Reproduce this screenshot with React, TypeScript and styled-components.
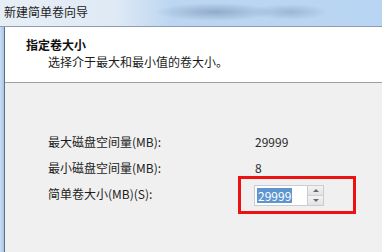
import React from "react";
import styled, { createGlobalStyle } from "styled-components";

const Global = createGlobalStyle`
  html, body { margin: 0; padding: 0; background: #f0f0f0; }
  body { font-family: "Noto Sans CJK SC", "Noto Sans", sans-serif; }
`;

const Window = styled.div`
  width: 382px;
  height: 252px;
  display: flex;
  flex-direction: column;
  overflow: hidden;
  font-size: 12px;
  color: #1b1b1b;
`;

const TitleBar = styled.div`
  height: 26px;
  flex: none;
  display: flex;
  align-items: center;
  padding-left: 4px;
  background:
    radial-gradient(ellipse 60px 9px at 215px 12px, rgba(110, 135, 170, 0.55), transparent),
    radial-gradient(ellipse 38px 8px at 290px 12px, rgba(120, 145, 180, 0.45), transparent),
    linear-gradient(90deg, #e7eef6 0%, #dfeaf5 30%, #bcd6f1 45%, #b8d5f3 100%);
  border-bottom: 1px solid #8e9cad;
`;

const TitleText = styled.span`
  font-size: 12px;
  color: #222;
  line-height: 1;
  margin-top: -3px;
`;

const Frame = styled.div`
  flex: 1;
  display: flex;
`;

const SideEdge = styled.div`
  width: 4px;
  flex: none;
  background: linear-gradient(90deg, #c9ddf2, #a7c6e8);
  border-right: 1px solid #5d6f85;
`;

const Dialog = styled.div`
  flex: 1;
  display: flex;
  flex-direction: column;
`;

const Header = styled.div`
  height: 56px;
  flex: none;
  background: #ffffff;
  border-bottom: 1px solid #a0a0a0;
  box-shadow: 0 1px 0 #ffffff;
  padding: 10px 0 0 21px;
  box-sizing: border-box;
  display: flex;
  flex-direction: column;
`;

const HeaderTitle = styled.div`
  font-weight: bold;
  font-size: 12px;
  line-height: 16px;
  color: #111;
`;

const HeaderSub = styled.div`
  font-size: 12px;
  line-height: 16px;
  margin-top: 1px;
  padding-left: 22px;
  color: #1a1a1a;
`;

const Body = styled.div`
  flex: 1;
  background: #f0f0f0;
  padding: 45px 0 0 43px;
  display: grid;
  grid-template-columns: 206px auto;
  grid-auto-rows: 26px;
  align-content: start;
  align-items: center;
`;

const Label = styled.div`
  font-size: 12px;
  color: #1c1c1c;
`;

const Value = styled.div`
  font-size: 12px;
  color: #2a2a2a;
  padding-left: 1px;
`;

const SpinnerWrap = styled.div`
  position: relative;
  display: flex;
  width: 70px;
  height: 21px;
  margin-top: 5px;
`;

const Field = styled.div`
  flex: 1;
  background: #ffffff;
  border: 1px solid #c9ccd2;
  border-right: none;
  display: flex;
  align-items: center;
  padding-left: 2px;
`;

const Selected = styled.span`
  background: #5d95cf;
  color: #ffffff;
  font-size: 12px;
  line-height: 15px;
  padding: 0 1px;
`;

const SpinButtons = styled.div`
  width: 15px;
  display: flex;
  flex-direction: column;
  border: 1px solid #c9ccd2;
`;

const SpinButton = styled.div<{ $down?: boolean }>`
  flex: 1;
  display: flex;
  align-items: center;
  justify-content: center;
  background: linear-gradient(#f4f4f4, #e2e2e2);
  border-top: ${(p) => (p.$down ? "1px solid #d0d0d0" : "none")};
  &::after {
    content: "";
    border-left: 3px solid transparent;
    border-right: 3px solid transparent;
    ${(p) =>
      p.$down
        ? "border-top: 3px solid #6a6a6a;"
        : "border-bottom: 3px solid #6a6a6a;"}
  }
`;

const Highlight = styled.div`
  position: absolute;
  left: -16px;
  top: -9px;
  width: 112px;
  height: 32px;
  border: 3px solid #ee1111;
  pointer-events: none;
`;

export default function App() {
  return (
    <>
      <Global />
      <Window>
        <TitleBar>
          <TitleText>新建简单卷向导</TitleText>
        </TitleBar>
        <Frame>
          <SideEdge />
          <Dialog>
            <Header>
              <HeaderTitle>指定卷大小</HeaderTitle>
              <HeaderSub>选择介于最大和最小值的卷大小。</HeaderSub>
            </Header>
            <Body>
              <Label>最大磁盘空间量(MB):</Label>
              <Value>29999</Value>
              <Label>最小磁盘空间量(MB):</Label>
              <Value>8</Value>
              <Label>简单卷大小(MB)(S):</Label>
              <SpinnerWrap>
                <Field>
                  <Selected>29999</Selected>
                </Field>
                <SpinButtons>
                  <SpinButton />
                  <SpinButton $down />
                </SpinButtons>
                <Highlight />
              </SpinnerWrap>
            </Body>
          </Dialog>
        </Frame>
      </Window>
    </>
  );
}
